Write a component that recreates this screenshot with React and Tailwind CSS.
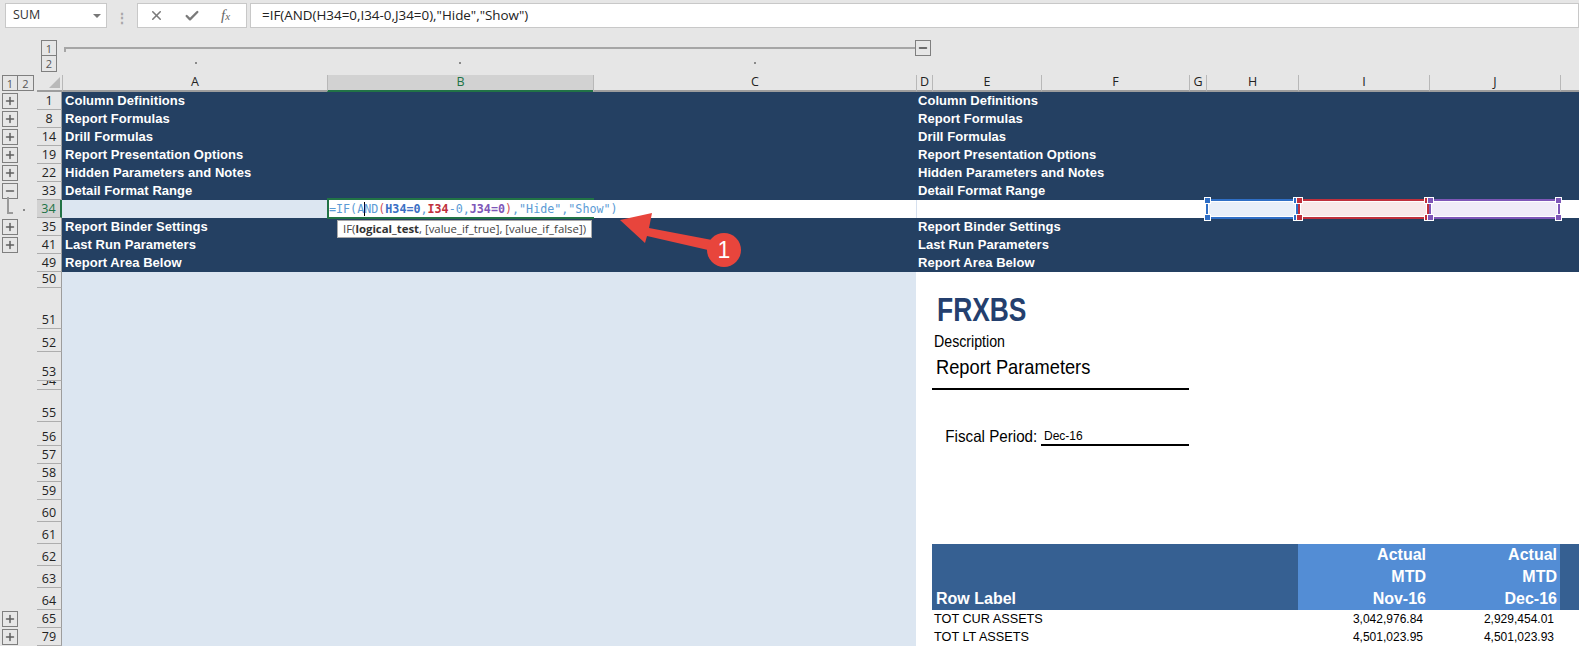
import React from "react";
import { X, Check, Plus, Minus } from "lucide-react";

const GRID = "grid grid-cols-[265px_266px_323px_16px_109px_148px_17px_92px_131px_131px_1fr] flex-1";
const BAND = "bg-[#244062]";
const BLUE = "bg-[#dce6f1]";
const HEAD = "bg-[#366092]";
const HEAD_LIGHT = "bg-[#538dd5]";

const arial = { fontFamily: '"Liberation Sans", Arial, sans-serif' };
const ui = { fontFamily: '"Open Sans", "Noto Sans", sans-serif' };

const OutlineBtn = ({ children, className = "" }) => (
  <div className={`w-[16px] h-[16px] border border-[#7f7f7f] bg-[#e6e6e6] flex items-center justify-center text-[11px] leading-none text-[#555] ${className}`}>
    {children}
  </div>
);

const Toggle = ({ open }) => (
  <OutlineBtn className="ml-[2px]">
    {open ? <Minus size={12} strokeWidth={3} color="#5f5f5f" /> : <Plus size={12} strokeWidth={3} color="#5f5f5f" />}
  </OutlineBtn>
);

const Row = ({ n, h, toggle, open, selected, children }) => (
  <div className={`flex ${h}`}>
    <div className="w-[37px] relative flex items-center">
      {toggle && <Toggle open={open} />}
      {selected && (
        <>
          <div className="absolute left-[7px] top-[-3px] w-[6px] h-[17px] border-l-2 border-b-2 border-[#9a9a9a]" />
          <div className="absolute left-[23px] top-[9px] w-[2px] h-[2px] bg-[#8a8a8a]" />
        </>
      )}
    </div>
    <div
      className={`w-[25px] overflow-hidden flex items-end justify-center border-b border-[#adadad] text-[12.5px] leading-[14px] pb-[1px] ${
        selected ? "bg-[#d2d2d2] text-[#217346] border-r-2 border-r-[#217346]" : "border-r border-r-[#9d9d9d] text-[#222]"
      }`}
      style={ui}
    >
      {n}
    </div>
    <div className={GRID} style={arial}>{children}</div>
  </div>
);

const Band = ({ n, label, toggle = true, open = false }) => (
  <Row n={n} h="h-[18px]" toggle={toggle} open={open}>
    <div className={`col-span-3 ${BAND} pl-[3px] text-white font-bold text-[13px] leading-[18px] tracking-[0.05px] whitespace-nowrap`}>{label}</div>
    <div className={`col-span-8 ${BAND} pl-[2px] text-white font-bold text-[13px] leading-[18px] tracking-[0.05px] whitespace-nowrap`}>{label}</div>
  </Row>
);

const Report = ({ n, h, toggle, children }) => (
  <Row n={n} h={h} toggle={toggle}>
    <div className={`col-span-3 ${BLUE}`} />
    {children}
  </Row>
);

const RangeCell = ({ fill, edge, handle }) => (
  <div className={`relative -my-px ${fill} border-2 ${edge} outline outline-1 -outline-offset-3 outline-white`}>
    <span className={`absolute left-[-4px] top-[-4px] w-[7px] h-[7px] ${handle} border border-white`} />
    <span className={`absolute left-[-4px] bottom-[-4px] w-[7px] h-[7px] ${handle} border border-white`} />
    <span className={`absolute right-[-4px] top-[-4px] w-[7px] h-[7px] ${handle} border border-white`} />
    <span className={`absolute right-[-4px] bottom-[-4px] w-[7px] h-[7px] ${handle} border border-white`} />
  </div>
);

const ColHead = ({ children, active }) => (
  <div
    className={`h-[17px] flex items-center justify-center text-[12.5px] leading-none border-b-2 border-l border-l-[#b8b8b8] ${
      active ? "bg-[#d2d2d2] text-[#217346] border-b-[#217346]" : "text-[#222] border-b-[#9d9d9d]"
    }`}
  >
    {children}
  </div>
);

const Dot = () => <div className="flex justify-center pt-[6px]"><span className="w-[2px] h-[2px] bg-[#8a8a8a]" /></div>;

export default function App() {
  return (
    <div className="w-[1579px] h-[646px] overflow-hidden relative bg-[#e6e6e6]" style={ui}>
      {/* formula bar */}
      <div className="h-[31px] pt-[3px] flex">
        <div className="ml-[5px] w-[102px] h-[25px] bg-white border border-[#c8c8c8] flex items-center justify-between pl-[7px] pr-[5px] text-[12.5px] text-[#333]">
          SUM
          <span className="w-0 h-0 border-x-[4px] border-x-transparent border-t-[4px] border-t-[#777]" />
        </div>
        <div className="w-[30px] flex items-center justify-center text-[#a8a8a8] text-[14px] font-bold">⋮</div>
        <div className="w-[110px] h-[25px] bg-white border border-[#c8c8c8] flex items-center pl-[11px] gap-[20px]">
          <X size={15} strokeWidth={2.5} color="#7a7a7a" />
          <Check size={16} strokeWidth={3.5} color="#7a7a7a" />
          <span className="italic text-[#666] text-[15px] ml-[1px]" style={{ fontFamily: '"Liberation Serif", serif' }}>f<span className="text-[11px]">x</span></span>
        </div>
        <div className="ml-[3px] flex-1 h-[25px] bg-white border border-[#c8c8c8] flex items-center pl-[11px] text-[13.4px] text-[#222]">
          =IF(AND(H34=0,I34-0,J34=0),"Hide","Show")
        </div>
      </div>

      {/* column outline */}
      <div className="h-[44px] flex pt-[9px]">
        <div className="w-[41px] shrink-0" />
        <div className="w-[16px] shrink-0">
          <OutlineBtn>1</OutlineBtn>
          <OutlineBtn className="border-t-0">2</OutlineBtn>
        </div>
        <div className="w-[7px] shrink-0" />
        <div className="w-[867px] shrink-0">
          <div className="h-[16px] flex items-center">
            <div className="flex-1 h-[5px] mt-[3px] border-t-2 border-l-2 border-[#a6a6a6]" />
            <OutlineBtn><Minus size={12} strokeWidth={3} color="#444" /></OutlineBtn>
          </div>
          <div className="grid grid-cols-[263px_266px_323px]">
            <Dot /><Dot /><Dot />
          </div>
        </div>
      </div>

      {/* column headers */}
      <div className="flex h-[17px]">
        <div className="w-[37px] flex pl-[2px]">
          <OutlineBtn>1</OutlineBtn>
          <OutlineBtn className="border-l-0">2</OutlineBtn>
        </div>
        <div className="w-[25px] border-b-2 border-[#9d9d9d] relative">
          <span className="absolute right-[2px] bottom-[2px] w-0 h-0 border-l-[11px] border-l-transparent border-b-[11px] border-b-[#b9b9b9]" />
        </div>
        <div className={GRID}>
          {["A", "B", "C", "D", "E", "F", "G", "H", "I", "J", ""].map((c) => (
            <ColHead key={c} active={c === "B"}>{c}</ColHead>
          ))}
        </div>
      </div>

      {/* sheet */}
      <Band n="1" label="Column Definitions" />
      <Band n="8" label="Report Formulas" />
      <Band n="14" label="Drill Formulas" />
      <Band n="19" label="Report Presentation Options" />
      <Band n="22" label="Hidden Parameters and Notes" />
      <Band n="33" label="Detail Format Range" open />
      <Row n="34" h="h-[18px]" selected>
        <div className={BLUE} />
        <div className="col-span-2 bg-white" />
        <div className="col-span-4 bg-white border-l border-[#d6e0ee]" />
        <RangeCell fill="bg-[#e8eff9]" edge="border-[#2f6fc6]" handle="bg-[#2f6fc6]" />
        <RangeCell fill="bg-[#f8e8e8]" edge="border-[#c0303c]" handle="bg-[#c0303c]" />
        <RangeCell fill="bg-[#f0ecf8]" edge="border-[#7e57b8]" handle="bg-[#7e57b8]" />
        <div className="bg-white" />
      </Row>
      <Band n="35" label="Report Binder Settings" />
      <Band n="41" label="Last Run Parameters" />
      <Band n="49" label="Report Area Below" toggle={false} />

      <Report n="50" h="h-[16px]"><div className="col-span-8 bg-white" /></Report>
      <Report n="51" h="h-[41px]">
        <div className="col-span-8 bg-white flex items-start">
          <span className="ml-[21px] mt-[5px] font-bold text-[33px] leading-[33px] text-[#243f6e] origin-left scale-x-[0.8]">FRXBS</span>
        </div>
      </Report>
      <Report n="52" h="h-[23px]">
        <div className="col-span-8 bg-white flex items-end">
          <span className="ml-[18px] mb-[1px] text-[16.5px] leading-[20px] text-black origin-left scale-x-[0.86]">Description</span>
        </div>
      </Report>
      <Report n="53" h="h-[29px]">
        <div className="col-span-8 bg-white flex items-end">
          <span className="ml-[20px] mb-[1px] text-[21px] leading-[26px] text-black origin-left scale-x-[0.87] whitespace-nowrap">Report Parameters</span>
        </div>
      </Report>
      <Report n="54" h="h-[9px]">
        <div className="bg-white" />
        <div className="col-span-2 bg-white border-b-2 border-black" />
        <div className="col-span-5 bg-white" />
      </Report>
      <Report n="55" h="h-[32px]"><div className="col-span-8 bg-white" /></Report>
      <Report n="56" h="h-[24px]">
        <div className="col-span-2 bg-white flex items-end justify-end">
          <span className="text-[16.5px] leading-[20px] pr-[4px] text-black origin-right scale-x-[0.92] whitespace-nowrap">Fiscal Period:</span>
        </div>
        <div className="bg-white border-b-2 border-black flex items-end pl-[3px] text-[12px] leading-[16px] text-black">Dec-16</div>
        <div className="col-span-5 bg-white" />
      </Report>
      {[["57", "h-[18px]"], ["58", "h-[18px]"], ["59", "h-[18px]"], ["60", "h-[22px]"], ["61", "h-[22px]"]].map(([n, h]) => (
        <Report key={n} n={n} h={h}><div className="col-span-8 bg-white" /></Report>
      ))}
      <Report n="62" h="h-[22px]">
        <div className="bg-white" />
        <div className={`col-span-4 ${HEAD}`} />
        <div className={`${HEAD_LIGHT} text-right pr-[3px] text-white font-bold text-[16px] leading-[22px]`}>Actual</div>
        <div className={`${HEAD_LIGHT} text-right pr-[3px] text-white font-bold text-[16px] leading-[22px]`}>Actual</div>
        <div className={HEAD} />
      </Report>
      <Report n="63" h="h-[22px]">
        <div className="bg-white" />
        <div className={`col-span-4 ${HEAD}`} />
        <div className={`${HEAD_LIGHT} text-right pr-[3px] text-white font-bold text-[16px] leading-[22px]`}>MTD</div>
        <div className={`${HEAD_LIGHT} text-right pr-[3px] text-white font-bold text-[16px] leading-[22px]`}>MTD</div>
        <div className={HEAD} />
      </Report>
      <Report n="64" h="h-[22px]">
        <div className="bg-white" />
        <div className={`col-span-4 ${HEAD} pl-[4px] text-white font-bold text-[16px] leading-[22px]`}>Row Label</div>
        <div className={`${HEAD_LIGHT} text-right pr-[3px] text-white font-bold text-[16px] leading-[22px]`}>Nov-16</div>
        <div className={`${HEAD_LIGHT} text-right pr-[3px] text-white font-bold text-[16px] leading-[22px]`}>Dec-16</div>
        <div className={HEAD} />
      </Report>
      <Report n="65" h="h-[18px]" toggle>
        <div className="bg-white" />
        <div className="col-span-4 bg-white pl-[2px] text-[12.7px] leading-[18px] text-black whitespace-nowrap">TOT CUR ASSETS</div>
        <div className="bg-white text-right pr-[6px] text-[12px] leading-[18px] text-black">3,042,976.84</div>
        <div className="bg-white text-right pr-[6px] text-[12px] leading-[18px] text-black">2,929,454.01</div>
        <div className="bg-white" />
      </Report>
      <Report n="79" h="h-[18px]" toggle>
        <div className="bg-white" />
        <div className="col-span-4 bg-white pl-[2px] text-[12.7px] leading-[18px] text-black whitespace-nowrap">TOT LT ASSETS</div>
        <div className="bg-white text-right pr-[6px] text-[12px] leading-[18px] text-black">4,501,023.95</div>
        <div className="bg-white text-right pr-[6px] text-[12px] leading-[18px] text-black">4,501,023.93</div>
        <div className="bg-white" />
      </Report>

      {/* formula being edited over cell B34 */}
      <div className="absolute left-[327px] top-[198px] w-[267px] h-[21px] border-2 border-r-0 border-[#217346]" />
      <div
        className="absolute left-[329px] top-[200px] h-[18px] text-[11.7px] leading-[18px] whitespace-pre text-[#5b9bd5]"
        style={{ fontFamily: '"DejaVu Sans Mono", monospace' }}
      >
        =IF(A<span className="border-l border-black -mr-px" />ND<span className="text-[#d0505a]">(</span>
        <b className="text-[#3a6fc4]">H34=0</b>,<b className="text-[#c0303c]">I34</b>-0,
        <b className="text-[#7e57b8]">J34=0</b><span className="text-[#d0505a]">)</span>,"Hide","Show")
      </div>

      {/* function tooltip */}
      <div className="absolute left-[337px] top-[220px] w-[255px] h-[18px] bg-white border border-[#a8a8a8] pl-[5px] text-[11.4px] leading-[16px] text-[#444] whitespace-nowrap">
        IF(<b className="text-[#333]">logical_test</b>, [value_if_true], [value_if_false])
      </div>

      {/* callout */}
      <svg className="absolute left-[610px] top-[205px]" width="110" height="55" viewBox="610 205 110 55">
        <polygon points="620,220 652,213 649,228 712,240 708,250 647,236 645,243" fill="#e8453c" />
      </svg>
      <div className="absolute left-[707px] top-[233px] w-[34px] h-[34px] rounded-full bg-[#e8453c] flex items-center justify-center text-white text-[23px]" style={arial}>
        1
      </div>
    </div>
  );
}
